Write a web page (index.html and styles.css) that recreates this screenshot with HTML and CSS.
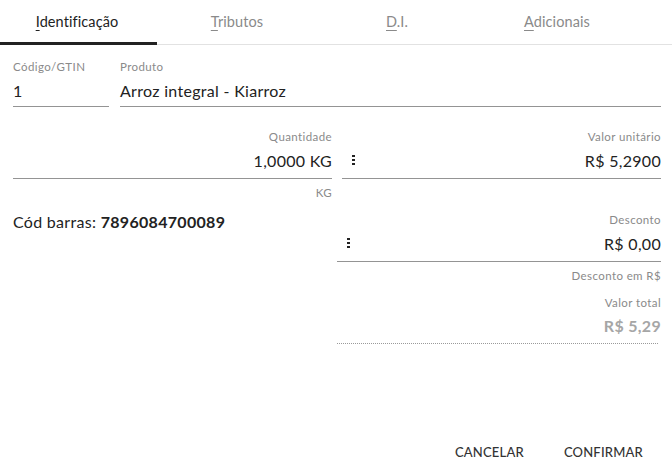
FILE: index.html
```html
<!DOCTYPE html>
<html lang="pt">
<head>
<meta charset="utf-8">
<link rel="stylesheet" href="styles.css">
</head>
<body>
<div class="dialog">
  <nav class="tabs">
    <div class="tab active"><span><u>I</u>dentificação</span></div>
    <div class="tab"><span><u>T</u>ributos</span></div>
    <div class="tab"><span><u>D</u>.I.</span></div>
    <div class="tab"><span><u>A</u>dicionais</span></div>
  </nav>

  <div class="form">
    <div class="row row1">
      <div class="field code">
        <div class="label">Código/GTIN</div>
        <div class="value">1</div>
      </div>
      <div class="field product">
        <div class="label">Produto</div>
        <div class="value">Arroz integral - Kiarroz</div>
      </div>
    </div>

    <div class="row row2">
      <div class="col">
        <div class="field num">
          <div class="label">Quantidade</div>
          <div class="value">1,0000 KG</div>
        </div>
        <div class="helper">KG</div>
      </div>
      <div class="col">
        <div class="field num">
          <div class="label">Valor unitário</div>
          <div class="value with-menu"><span class="kebab"><i></i><i></i><i></i></span><span>R$ 5,2900</span></div>
        </div>
      </div>
    </div>

    <div class="row row3">
      <div class="barcode">Cód barras: <b>7896084700089</b></div>
      <div class="col wide">
        <div class="field num">
          <div class="label">Desconto</div>
          <div class="value with-menu"><span class="kebab"><i></i><i></i><i></i></span><span>R$ 0,00</span></div>
        </div>
        <div class="helper">Desconto em R$</div>
        <div class="field num total">
          <div class="label">Valor total</div>
          <div class="value">R$ 5,29</div>
        </div>
      </div>
    </div>
  </div>

  <div class="actions">
    <button class="btn">CANCELAR</button>
    <button class="btn">CONFIRMAR</button>
  </div>
</div>
</body>
</html>
```

FILE: styles.css
```css
* { box-sizing: border-box; }
html, body { margin: 0; padding: 0; background: #fff; }
body {
  font-family: "Lato", "Open Sans", sans-serif;
  color: #222;
  width: 672px;
  height: 474px;
  overflow: hidden;
}
.dialog {
  display: flex;
  flex-direction: column;
  height: 474px;
}
.tabs {
  display: flex;
  height: 45px;
  border-bottom: 1px solid #e2e2e2;
}
.tab {
  position: relative;
  width: 160px;
  padding-right: 6px;
  display: flex;
  align-items: center;
  justify-content: center;
  font-size: 14.5px;
  letter-spacing: 0.1px;
  color: #8a8a8a;
  padding-bottom: 1px;
}
.tab u { text-underline-offset: 3px; text-decoration-thickness: 1px; }
.tab.active { color: #222; }
.tab.active::after {
  content: "";
  position: absolute;
  left: 0;
  bottom: -1px;
  width: 157px;
  height: 3px;
  background: #222;
}
.form {
  padding: 0 11px 0 13px;
}
.row { display: flex; }
.row1 { gap: 11px; padding-top: 15px; }
.field {
  border-bottom: 1px solid #949494;
}
.label {
  font-size: 11.5px;
  line-height: 14px;
  letter-spacing: 0.4px;
  color: #8a8a8a;
}
.value {
  font-size: 16px;
  line-height: 20px;
  letter-spacing: 0.3px;
  color: #222;
}
.row1 .value { margin-top: 7px; padding-bottom: 5px; }
.code { width: 96px; }
.product { flex: 1; }

.row2 { gap: 10px; padding-top: 23px; }
.col { width: 319px; display: flex; flex-direction: column; }
.num { text-align: right; }
.num .value { margin-top: 7px; padding-bottom: 7px; }
.with-menu {
  display: flex;
  justify-content: space-between;
  align-items: center;
}
.kebab {
  display: flex;
  flex-direction: column;
  gap: 2px;
  margin-left: 10px;
  margin-top: -2px;
}
.kebab i {
  display: block;
  width: 3px;
  height: 2px;
  background: #222;
}
.helper {
  text-align: right;
  font-size: 11.5px;
  line-height: 14px;
  letter-spacing: 0.4px;
  color: #8a8a8a;
  margin-top: 7px;
}
.row3 { justify-content: space-between; padding-top: 13px; }
.barcode {
  font-size: 16px;
  line-height: 20px;
  letter-spacing: 0.3px;
  margin-top: -1px;
  color: #222;
}
.barcode b { font-weight: 700; }
.col.wide { width: 324px; }
.total {
  margin-top: 13px;
  border-bottom: 1px dotted #9a9a9a;
  margin-right: 3px;
}
.total .label { margin-right: -3px; }
.total .value { color: #a6a6a6; font-weight: 700; margin-right: -3px; margin-top: 6px; padding-bottom: 7px; }
.actions {
  margin-top: auto;
  display: flex;
  justify-content: flex-end;
  gap: 14px;
  padding: 0 16px 6px 0;
}
.btn {
  background: none;
  border: none;
  font-family: inherit;
  font-size: 13px;
  font-weight: 500;
  letter-spacing: 0.2px;
  color: #333;
  padding: 6px 13px;
  line-height: 20px;
}
```
